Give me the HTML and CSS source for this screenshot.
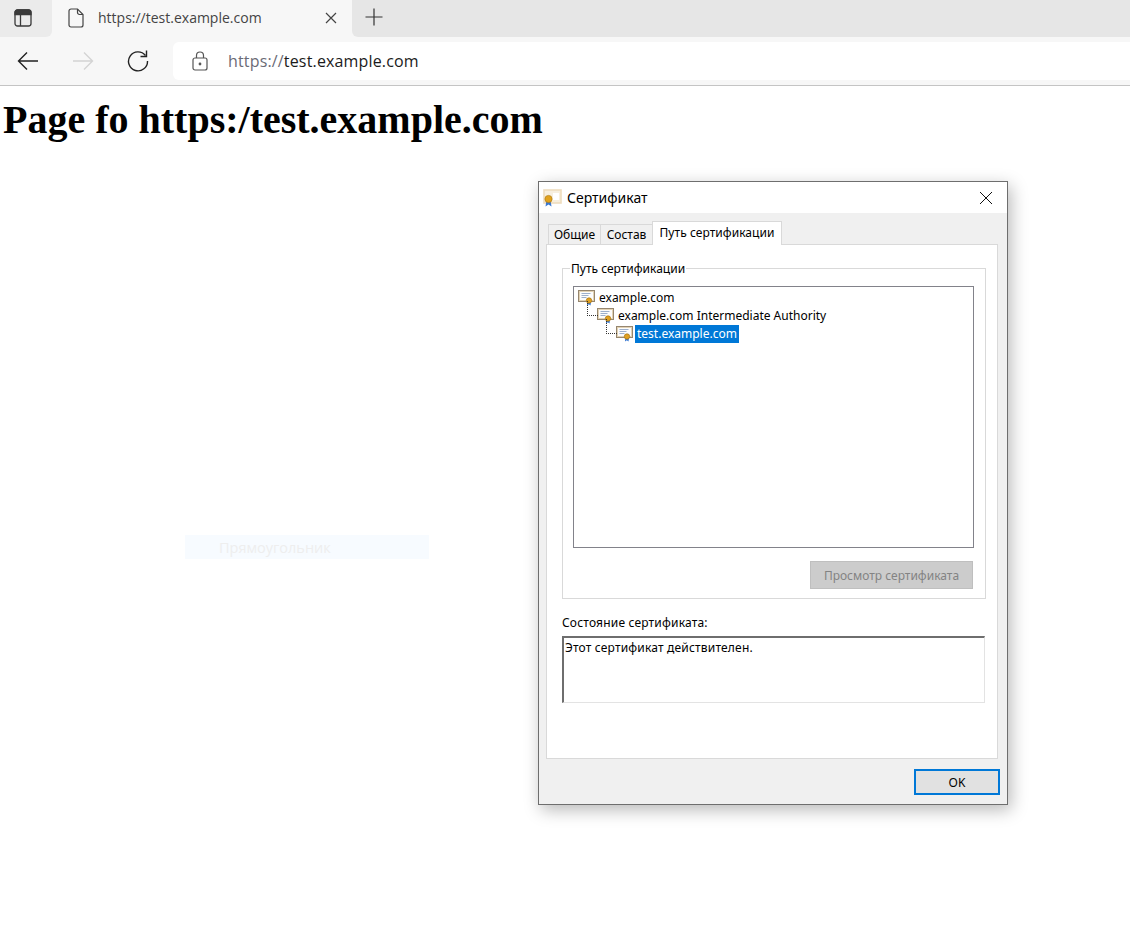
FILE: index.html
```html
<!DOCTYPE html>
<html lang="ru">
<head>
<meta charset="utf-8">
<title>Сертификат</title>
<link rel="stylesheet" href="styles.css">
</head>
<body>
<svg class="defs" width="0" height="0" aria-hidden="true">
  <symbol id="cert" viewBox="0 0 18 16">
    <rect x="0.5" y="0.5" width="16" height="11" fill="#f5efe4" stroke="#96866f"/>
    <rect x="1.5" y="1.5" width="14" height="9" fill="#fcfcfc" stroke="#e2d2b4"/>
    <path d="M3.5 3.5h9M3.5 5.5h7M3.500 7.500h5" stroke="#9db0cc" fill="none"/>
    <path d="M9.500 11l-.5 4.500 1.800-1.200L12.500 15.500 13 11z" fill="#2a6fd0"/>
    <circle cx="11" cy="10.500" r="2.700" fill="#e0a020" stroke="#a87412" stroke-width=".7"/>
  </symbol>
</svg>

<header class="chrome">
  <div class="tabstrip">
    <div class="strip-side">
      <svg class="ico" width="18" height="18" viewBox="0 0 18 18" fill="none" stroke="#3a3a3a" stroke-width="1.3">
        <rect x="1" y="1" width="16" height="16" rx="2.5"/>
        <path d="M1 5.500V3.500A2.500 2.500 0 0 1 3.500 1h11A2.500 2.500 0 0 1 17 3.500v2z" fill="#3a3a3a"/>
        <path d="M6.500 5.500V17"/>
      </svg>
    </div>
    <div class="tab">
      <svg class="tab-doc" width="16" height="20" viewBox="0 0 16 20" fill="none" stroke="#444" stroke-width="1.2">
        <path d="M3 1h6.500L15 6.500V17a2 2 0 0 1-2 2H3a2 2 0 0 1-2-2V3a2 2 0 0 1 2-2z"/>
        <path d="M9.500 1v3.500a2 2 0 0 0 2 2H15"/>
      </svg>
      <span class="tab-title">https://test.example.com</span>
      <svg class="tab-close" width="12" height="12" viewBox="0 0 12 12" stroke="#444" stroke-width="1.2"><path d="M1 1l10 10M11 1L1 11"/></svg>
    </div>
    <div class="strip-rest">
      <svg width="18" height="18" viewBox="0 0 18 18" stroke="#333" stroke-width="1.2"><path d="M9 0.500v17M0.500 9h17"/></svg>
    </div>
  </div>
  <div class="toolbar">
    <svg class="nav nav-back" width="22" height="20" viewBox="0 0 22 20" fill="none" stroke="#222" stroke-width="1.4"><path d="M21 10H1.500M10 1.500L1.500 10l8.500 8.500"/></svg>
    <svg class="nav nav-fwd" width="22" height="20" viewBox="0 0 22 20" fill="none" stroke="#d4d4d4" stroke-width="1.4"><path d="M1 10h19.500M12 1.500l8.500 8.500-8.500 8.500"/></svg>
    <svg class="nav nav-reload" width="22" height="22" viewBox="0 0 22 22" fill="none" stroke="#222" stroke-width="1.4"><path d="M18.500 5.500A9.500 9.500 0 1 0 20.500 11"/><path d="M19.500 0.500v6h-6"/></svg>
    <div class="address">
      <svg class="lock" width="16" height="20" viewBox="0 0 16 20" fill="none" stroke="#555" stroke-width="1.2">
        <rect x="1" y="7" width="14" height="12" rx="2"/>
        <path d="M4.500 7V4.500a3.500 3.500 0 0 1 7 0V7"/>
        <circle cx="8" cy="13" r="0.800" fill="#555"/>
      </svg>
      <span class="url"><span class="url-scheme">https://</span>test.example.com</span>
    </div>
  </div>
</header>

<h1 class="heading">Page fo https:/test.example.com</h1>

<div class="ghost"><span>Прямоугольник</span></div>

<section class="dialog">
  <div class="titlebar">
    <svg class="title-icon" width="20" height="18" viewBox="0 0 20 18">
      <rect x="1" y="1" width="17" height="13" fill="#f7efdf" stroke="#eedcbd" stroke-width="1.6"/>
      <rect x="10" y="4" width="6" height="7" fill="#fff"/>
      <path d="M3.500 11l-1 6.500 3-2 3 2-1-6.500z" fill="#3a78d0"/>
      <circle cx="5.500" cy="10" r="3.600" fill="#e2a21c" stroke="#b07c14" stroke-width=".7"/>
    </svg>
    <span class="title-text">Сертификат</span>
    <svg class="title-close" width="12" height="12" viewBox="0 0 12 12" stroke="#111" stroke-width="1"><path d="M0 0l12 12M12 0L0 12"/></svg>
  </div>
  <div class="dlg-body">
    <div class="tabs">
      <span class="dtab dtab-general">Общие</span>
      <span class="dtab dtab-details">Состав</span>
      <span class="dtab dtab-active">Путь сертификации</span>
    </div>
    <div class="panel">
      <fieldset class="group">
        <legend class="group-title">Путь сертификации</legend>
        <div class="tree">
          <div class="node">
            <svg class="cert" width="18" height="16"><use href="#cert"/></svg>
            <span class="node-label">example.com</span>
          </div>
          <div class="node node-l2">
            <span class="connector"></span>
            <svg class="cert" width="18" height="16"><use href="#cert"/></svg>
            <span class="node-label">example.com Intermediate Authority</span>
          </div>
          <div class="node node-l3">
            <span class="connector"></span>
            <svg class="cert" width="18" height="16"><use href="#cert"/></svg>
            <span class="node-label node-selected">test.example.com</span>
          </div>
        </div>
        <div class="group-actions">
          <span class="btn-disabled">Просмотр сертификата</span>
        </div>
      </fieldset>
      <div class="status-label">Состояние сертификата:</div>
      <div class="status-box">Этот сертификат действителен.</div>
    </div>
    <div class="footer">
      <span class="btn-ok">OK</span>
    </div>
  </div>
</section>
</body>
</html>
```
FILE: styles.css
```css
* { box-sizing: border-box; }
html, body { margin: 0; padding: 0; background: #fff; }
body { width: 1130px; height: 925px; overflow: hidden; position: relative; }
.defs { position: absolute; }

.chrome { background: #f7f7f7; border-bottom: 1px solid #c4c4c4; height: 86px; }
.tabstrip { display: flex; height: 37px; }
.strip-side {
  width: 52px; background: #ebebeb; border-bottom-right-radius: 6px;
  display: flex; align-items: center; justify-content: center; padding: 0 6px 2px 0;
}
.tab {
  width: 300px; display: flex; align-items: center; background: #f7f7f7;
  padding: 0 15px 2px 16px;
}
.tab-title { font: 14px "Open Sans", "Noto Sans", sans-serif; color: #444; margin-left: 14px; flex: 1; }
.strip-rest {
  flex: 1; background: #e6e6e6; border-bottom-left-radius: 6px;
  display: flex; align-items: center; padding: 0 0 4px 13px;
}

.toolbar { display: flex; align-items: center; height: 48px; position: relative; }
.nav { flex: none; }
.nav-back { margin-left: 17px; }
.nav-fwd { margin-left: 33px; }
.nav-reload { margin-left: 33px; }
.address {
  margin-left: 24px; flex: 1; height: 38px; background: #fff;
  border-radius: 6px 0 0 6px; display: flex; align-items: center; padding-left: 19px;
}
.url { font: 16px "Open Sans", "Noto Sans", sans-serif; color: #1b1b1b; margin-left: 20px; letter-spacing: .16px; }
.url-scheme { color: #6b6b76; }

.heading {
  font: bold 40px/46px "Liberation Serif", serif; color: #000;
  margin: 11px 0 0 3px;
}

.ghost {
  position: absolute; left: 185px; top: 535px; width: 244px; height: 24px;
  background: #f7fbff; padding-left: 34px;
  font: 14.500px/25px "Open Sans", "Noto Sans", sans-serif; color: #eeeeee;
}

.dialog {
  position: absolute; left: 538px; top: 181px; width: 470px; height: 624px;
  border: 1px solid #6e6e6e; background: #f0f0f0;
  box-shadow: 3px 5px 16px rgba(0,0,0,.28);
  font: 12px "Noto Sans", "DejaVu Sans", sans-serif; color: #000;
  display: flex; flex-direction: column;
}
.titlebar {
  height: 31px; background: #fff; display: flex; align-items: center; padding: 0 15px 0 4px; flex: none;
}
.title-icon { flex: none; }
.title-text { font-size: 14px; margin-left: 4px; flex: 1; }
.dlg-body { flex: 1; display: flex; flex-direction: column; padding: 7px 9px 0 7px; }
.tabs { display: flex; align-items: flex-end; height: 24px; padding-left: 2px; position: relative; z-index: 1; }
.dtab {
  display: flex; align-items: center; justify-content: center;
  border: 1px solid #d9d9d9; border-bottom: none; background: #f0f0f0; height: 20px;
}
.dtab-general { width: 53px; }
.dtab-details { width: 51px; border-left: none; border-right: none; }
.dtab-active { width: 130px; height: 24px; background: #fff; padding-bottom: 3px; margin-bottom: -1px; letter-spacing: .05px; }
.panel {
  width: 452px; height: 515px; background: #fff; border: 1px solid #d9d9d9; padding: 15px 12px 0 15px;
}
.group {
  margin: 0; padding: 0 12px 9px 10px; border: 1px solid #d9d9d9; width: 424px; height: 339px; min-width: 0;
}
.group-title { padding: 2px 1px 0; margin-left: -3px; line-height: 14px; }
.tree {
  margin-top: 10px; width: 401px; height: 262px; border: 1px solid #82828a; padding: 2px 0 0 4px; line-height: 18px;
}
.node { display: flex; align-items: center; height: 18px; position: relative; }
.cert { flex: none; }
.node-label { margin-left: 1px; padding: 0 2px; line-height: 18px; }
.node-l2 { padding-left: 19px; }
.node-l3 { padding-left: 38px; }
.connector {
  position: absolute; top: -6px; width: 11px; height: 15px;
  border-left: 1px dotted #333; border-bottom: 1px dotted #333;
}
.node-l2 .connector { left: 9px; }
.node-l3 .connector { left: 28px; }
.node .node-selected { background: #0078d7; color: #fff; }
.group-actions { display: flex; justify-content: flex-end; margin-top: 13px; }
.btn-disabled {
  width: 163px; height: 28px; background: #cccccc; border: 1px solid #bfbfbf; color: #838383;
  display: flex; align-items: center; justify-content: center;
}
.status-label { margin-top: 16px; line-height: 16px; letter-spacing: .18px; }
.status-box {
  margin-top: 5px; width: 423px; height: 67px; border: 1px solid #e3e3e3;
  border-top: 2px solid #6e6e6e; border-left: 2px solid #6e6e6e; padding: 2px 0 0 1px; line-height: 16px; letter-spacing: .18px;
}
.footer { display: flex; justify-content: flex-end; padding-top: 10px; margin-right: -2px; }
.btn-ok {
  width: 86px; height: 26px; background: #e1e1e1; border: 2px solid #0078d7;
  display: flex; align-items: center; justify-content: center;
}
.tab-doc, .tab-close, .lock { flex: none; }
```
